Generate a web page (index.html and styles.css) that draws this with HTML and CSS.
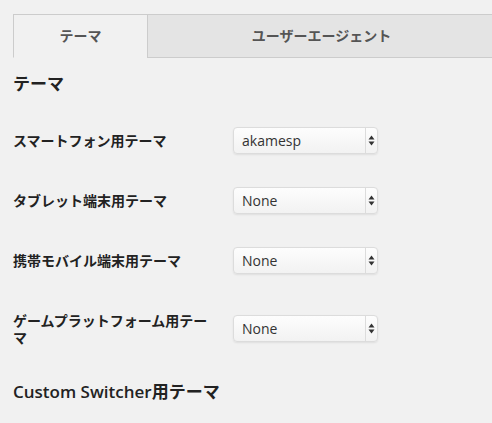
FILE: index.html
```html
<!DOCTYPE html>
<html lang="ja">
<head>
<meta charset="UTF-8">
<meta name="viewport" content="width=device-width, initial-scale=1.0">
<title>テーマ設定</title>
<link rel="stylesheet" href="styles.css">
</head>
<body>

<div class="wrap">
    <div class="tabs">
        <div class="tab active">テーマ</div>
        <div class="tab">ユーザーエージェント</div>
    </div>

    <h3 class="section-title">テーマ</h3>

    <div class="form-rows">
        <div class="form-row">
            <div class="label">スマートフォン用テーマ</div>
            <div class="field">
                <div class="select">
                    <span class="select-value">akamesp</span>
                    <span class="select-arrows">
                        <svg width="7" height="11" viewBox="0 0 7 11"><path d="M3.5 0.5 L6.5 4.5 L0.5 4.5 Z M0.5 6.5 L6.5 6.5 L3.5 10.5 Z" fill="#333"/></svg>
                    </span>
                </div>
            </div>
        </div>
        <div class="form-row">
            <div class="label">タブレット端末用テーマ</div>
            <div class="field">
                <div class="select">
                    <span class="select-value">None</span>
                    <span class="select-arrows">
                        <svg width="7" height="11" viewBox="0 0 7 11"><path d="M3.5 0.5 L6.5 4.5 L0.5 4.5 Z M0.5 6.5 L6.5 6.5 L3.5 10.5 Z" fill="#333"/></svg>
                    </span>
                </div>
            </div>
        </div>
        <div class="form-row">
            <div class="label">携帯モバイル端末用テーマ</div>
            <div class="field">
                <div class="select">
                    <span class="select-value">None</span>
                    <span class="select-arrows">
                        <svg width="7" height="11" viewBox="0 0 7 11"><path d="M3.5 0.5 L6.5 4.5 L0.5 4.5 Z M0.5 6.5 L6.5 6.5 L3.5 10.5 Z" fill="#333"/></svg>
                    </span>
                </div>
            </div>
        </div>
        <div class="form-row">
            <div class="label">ゲームプラットフォーム用テーマ</div>
            <div class="field">
                <div class="select">
                    <span class="select-value">None</span>
                    <span class="select-arrows">
                        <svg width="7" height="11" viewBox="0 0 7 11"><path d="M3.5 0.5 L6.5 4.5 L0.5 4.5 Z M0.5 6.5 L6.5 6.5 L3.5 10.5 Z" fill="#333"/></svg>
                    </span>
                </div>
            </div>
        </div>
    </div>

    <h3 class="section-title last">Custom Switcher用テーマ</h3>
</div>

</body>
</html>
```

FILE: styles.css
```css
body {
    margin: 0;
    background-color: #f1f1f1;
    font-family: 'Open Sans', 'Noto Sans CJK JP', sans-serif;
    color: #222;
    overflow: hidden;
}

.wrap {
    padding: 14px 0 0 13px;
}

.tabs {
    display: flex;
    width: 482px;
}

.tab {
    height: 42px;
    line-height: 42px;
    text-align: center;
    font-size: 14px;
    font-weight: bold;
    color: #555;
    border-top: 1px solid #ccc;
    border-left: 1px solid #ccc;
    border-bottom: 1px solid #ccc;
    background-color: #e4e4e4;
    flex: 1;
}

.tab.active {
    flex: 0 0 133px;
    background-color: #f1f1f1;
    border-bottom-color: transparent;
}

.section-title {
    margin: 14px 0 14px;
    font-size: 17px;
    line-height: 24px;
    font-weight: bold;
    color: #222;
}

.section-title.last {
    margin-top: 13px;
    font-weight: 600;
}

.form-row {
    display: flex;
    align-items: center;
}

.label {
    width: 200px;
    padding: 21.5px 20px 21.5px 0;
    font-size: 14px;
    line-height: 17px;
    font-weight: bold;
    color: #222;
}

.field {
    padding: 16.5px 0;
}

.select {
    display: flex;
    width: 143px;
    height: 25px;
    border: 1px solid #dcdcdc;
    border-radius: 4px;
    background: linear-gradient(#fdfdfd, #f2f2f2);
    box-shadow: 0 1px 2px rgba(0, 0, 0, 0.08);
}

.select-value {
    flex: 1;
    padding-left: 8px;
    font-size: 14px;
    line-height: 25px;
    color: #333;
}

.select-arrows {
    width: 11px;
    display: flex;
    align-items: center;
    justify-content: center;
    border-left: 1px solid #dcdcdc;
}
```
